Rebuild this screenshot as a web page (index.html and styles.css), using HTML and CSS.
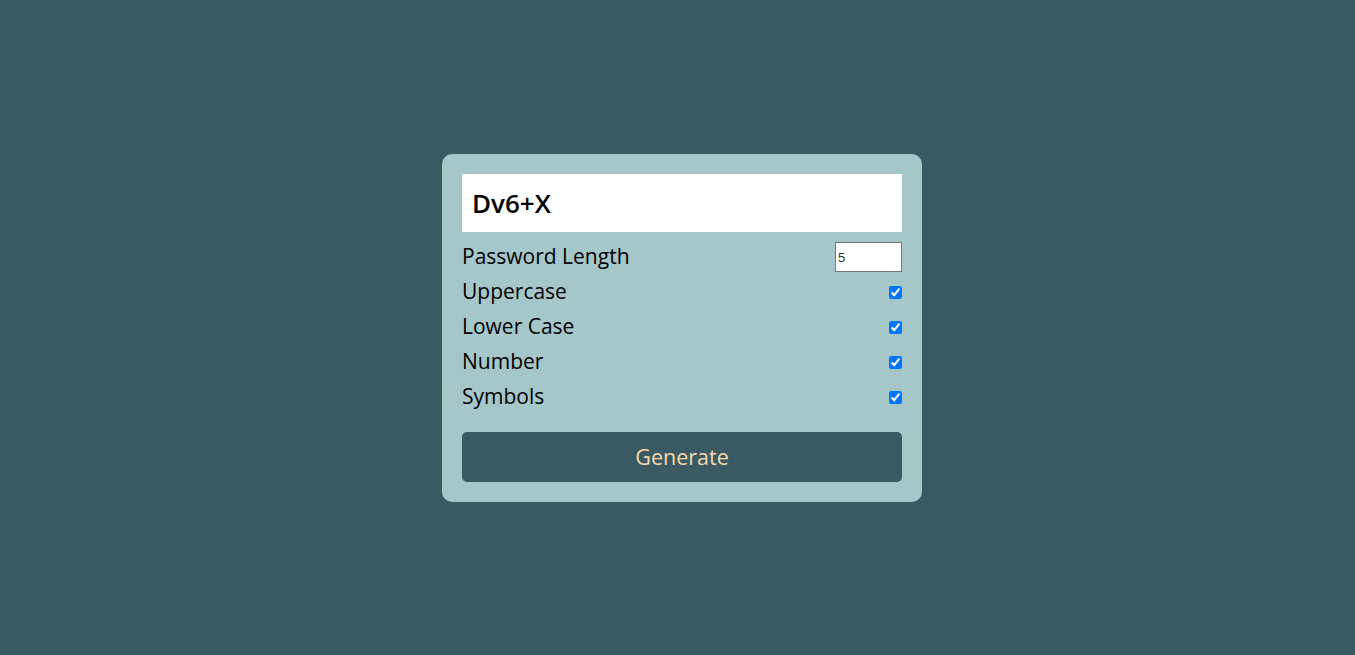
FILE: index.html
```html
<!DOCTYPE html>
<html lang="en">
<head>
<meta charset="UTF-8">
<title>Password Generator</title>
<link rel="stylesheet" href="styles.css">
</head>
<body>
<main class="page">
  <div class="card">
    <div class="result">Dv6+X</div>
    <div class="options">
      <label class="row">
        <span>Password Length</span>
        <input class="length" type="number" value="5" min="4" max="20">
      </label>
      <label class="row">
        <span>Uppercase</span>
        <input type="checkbox" checked>
      </label>
      <label class="row">
        <span>Lower Case</span>
        <input type="checkbox" checked>
      </label>
      <label class="row">
        <span>Number</span>
        <input type="checkbox" checked>
      </label>
      <label class="row">
        <span>Symbols</span>
        <input type="checkbox" checked>
      </label>
    </div>
    <button class="generate" type="button">Generate</button>
  </div>
</main>
</body>
</html>
```
FILE: styles.css
```css
* { box-sizing: border-box; }
html, body { margin: 0; padding: 0; }
body {
  background: #395a63;
  font-family: "Open Sans", "Noto Sans", sans-serif;
  color: #000;
}
.page {
  height: 655px;
  padding-left: 9px;
  display: flex;
  align-items: center;
  justify-content: center;
}
.card {
  width: 480px;
  background: #a5c7c9;
  border-radius: 10px;
  padding: 20px;
  display: flex;
  flex-direction: column;
}
.result {
  height: 58px;
  background: #fff;
  display: flex;
  align-items: center;
  padding: 0 10px;
  font-size: 26px;
  font-weight: 600;
}
.options {
  margin-top: 8px;
  display: flex;
  flex-direction: column;
}
.row {
  height: 35px;
  display: flex;
  align-items: center;
  justify-content: space-between;
  font-size: 21px;
}
.row span { margin-top: -2px; }
.row input[type="checkbox"] {
  margin: 0;
  width: 13px;
  height: 13px;
}
.length {
  width: 67px;
  height: 30px;
  margin: 0;
  padding: 1px 2px;
  font-family: "Liberation Sans", Arial, sans-serif;
  font-size: 13px;
  color: #333;
  border: 1px solid #767676;
  background: #fff;
}
.generate {
  margin-top: 17px;
  height: 50px;
  border: none;
  border-radius: 5px;
  background: #395a63;
  color: #f7d9aa;
  font-family: "Open Sans", "Noto Sans", sans-serif;
  font-size: 21.5px;
}
```
